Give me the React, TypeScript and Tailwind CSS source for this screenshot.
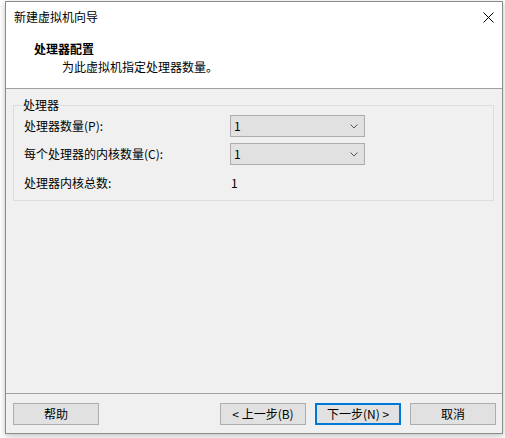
import React from 'react'

const font = { fontFamily: "'Noto Sans CJK SC', 'Noto Sans', sans-serif" }

const Combo = ({ value }: { value: string }) => (
  <div className="w-[135px] h-[22px] border border-[#adadad] bg-[#e1e1e1] flex items-center justify-between pl-[3px] pr-[6px]">
    <span>{value}</span>
    <svg width="8" height="5" viewBox="0 0 8 5" className="text-[#555]">
      <path d="M0.5 0.5 L4 4 L7.5 0.5" fill="none" stroke="currentColor" strokeWidth="1" />
    </svg>
  </div>
)

const Btn = ({ label, primary }: { label: string; primary?: boolean }) => (
  <button
    className={
      primary
        ? 'w-[86px] h-[22px] border-2 border-[#0078d7] bg-[#e1e1e1] text-[12px] text-black flex items-center justify-center'
        : 'w-[86px] h-[22px] border border-[#adadad] bg-[#e1e1e1] text-[12px] text-black flex items-center justify-center'
    }
  >
    {label}
  </button>
)

export default function App() {
  return (
    <div className="w-[505px] h-[438px] bg-white pt-[1px] pl-[5px] text-[12px] text-black" style={font}>
      <div className="w-[498px] h-[433px] border border-[#8c8c8c] flex flex-col shadow-[0_2px_6px_rgba(0,0,0,0.25)]">
        {/* title + header */}
        <div className="bg-white h-[87px] flex flex-col border-b border-[#a0a0a0]">
          <div className="h-[30px] flex items-center justify-between pl-[8px] pr-[8px]">
            <span className="text-[12px]">新建虚拟机向导</span>
            <svg width="11" height="11" viewBox="0 0 11 11">
              <path d="M0.5 0.5 L10.5 10.5 M10.5 0.5 L0.5 10.5" stroke="#000" strokeWidth="1" />
            </svg>
          </div>
          <div className="pl-[28px] pt-[8px] font-bold leading-[18px]">处理器配置</div>
          <div className="pl-[56px] leading-[18px]">为此虚拟机指定处理器数量。</div>
        </div>

        {/* body */}
        <div className="flex-1 bg-[#f0f0f0] flex flex-col">
          <div className="flex-1 pt-[16px] pl-[7px] pr-[8px]">
            <div className="relative border border-[#dcdcdc] pt-[9px] pb-[8px] pl-[10px]">
              <span className="absolute left-[8px] top-[-10px] bg-[#f0f0f0] px-[1px] leading-[18px]">处理器</span>
              <div className="flex items-center h-[22px]">
                <span className="w-[206px]">处理器数量(P):</span>
                <Combo value="1" />
              </div>
              <div className="flex items-center h-[22px] mt-[6px]">
                <span className="w-[206px]">每个处理器的内核数量(C):</span>
                <Combo value="1" />
              </div>
              <div className="flex items-center h-[18px] mt-[9px]">
                <span className="w-[206px]">处理器内核总数:</span>
                <span className="pl-[1px]">1</span>
              </div>
            </div>
          </div>

          <div className="border-t border-[#a0a0a0] h-[40px] flex items-start pt-[9px] pl-[7px] pr-[6px]">
            <Btn label="帮助" />
            <div className="flex-1" />
            <div className="flex gap-[9px]">
              <Btn label="< 上一步(B)" />
              <Btn label="下一步(N) >" primary />
              <Btn label="取消" />
            </div>
          </div>
        </div>
      </div>
    </div>
  )
}
